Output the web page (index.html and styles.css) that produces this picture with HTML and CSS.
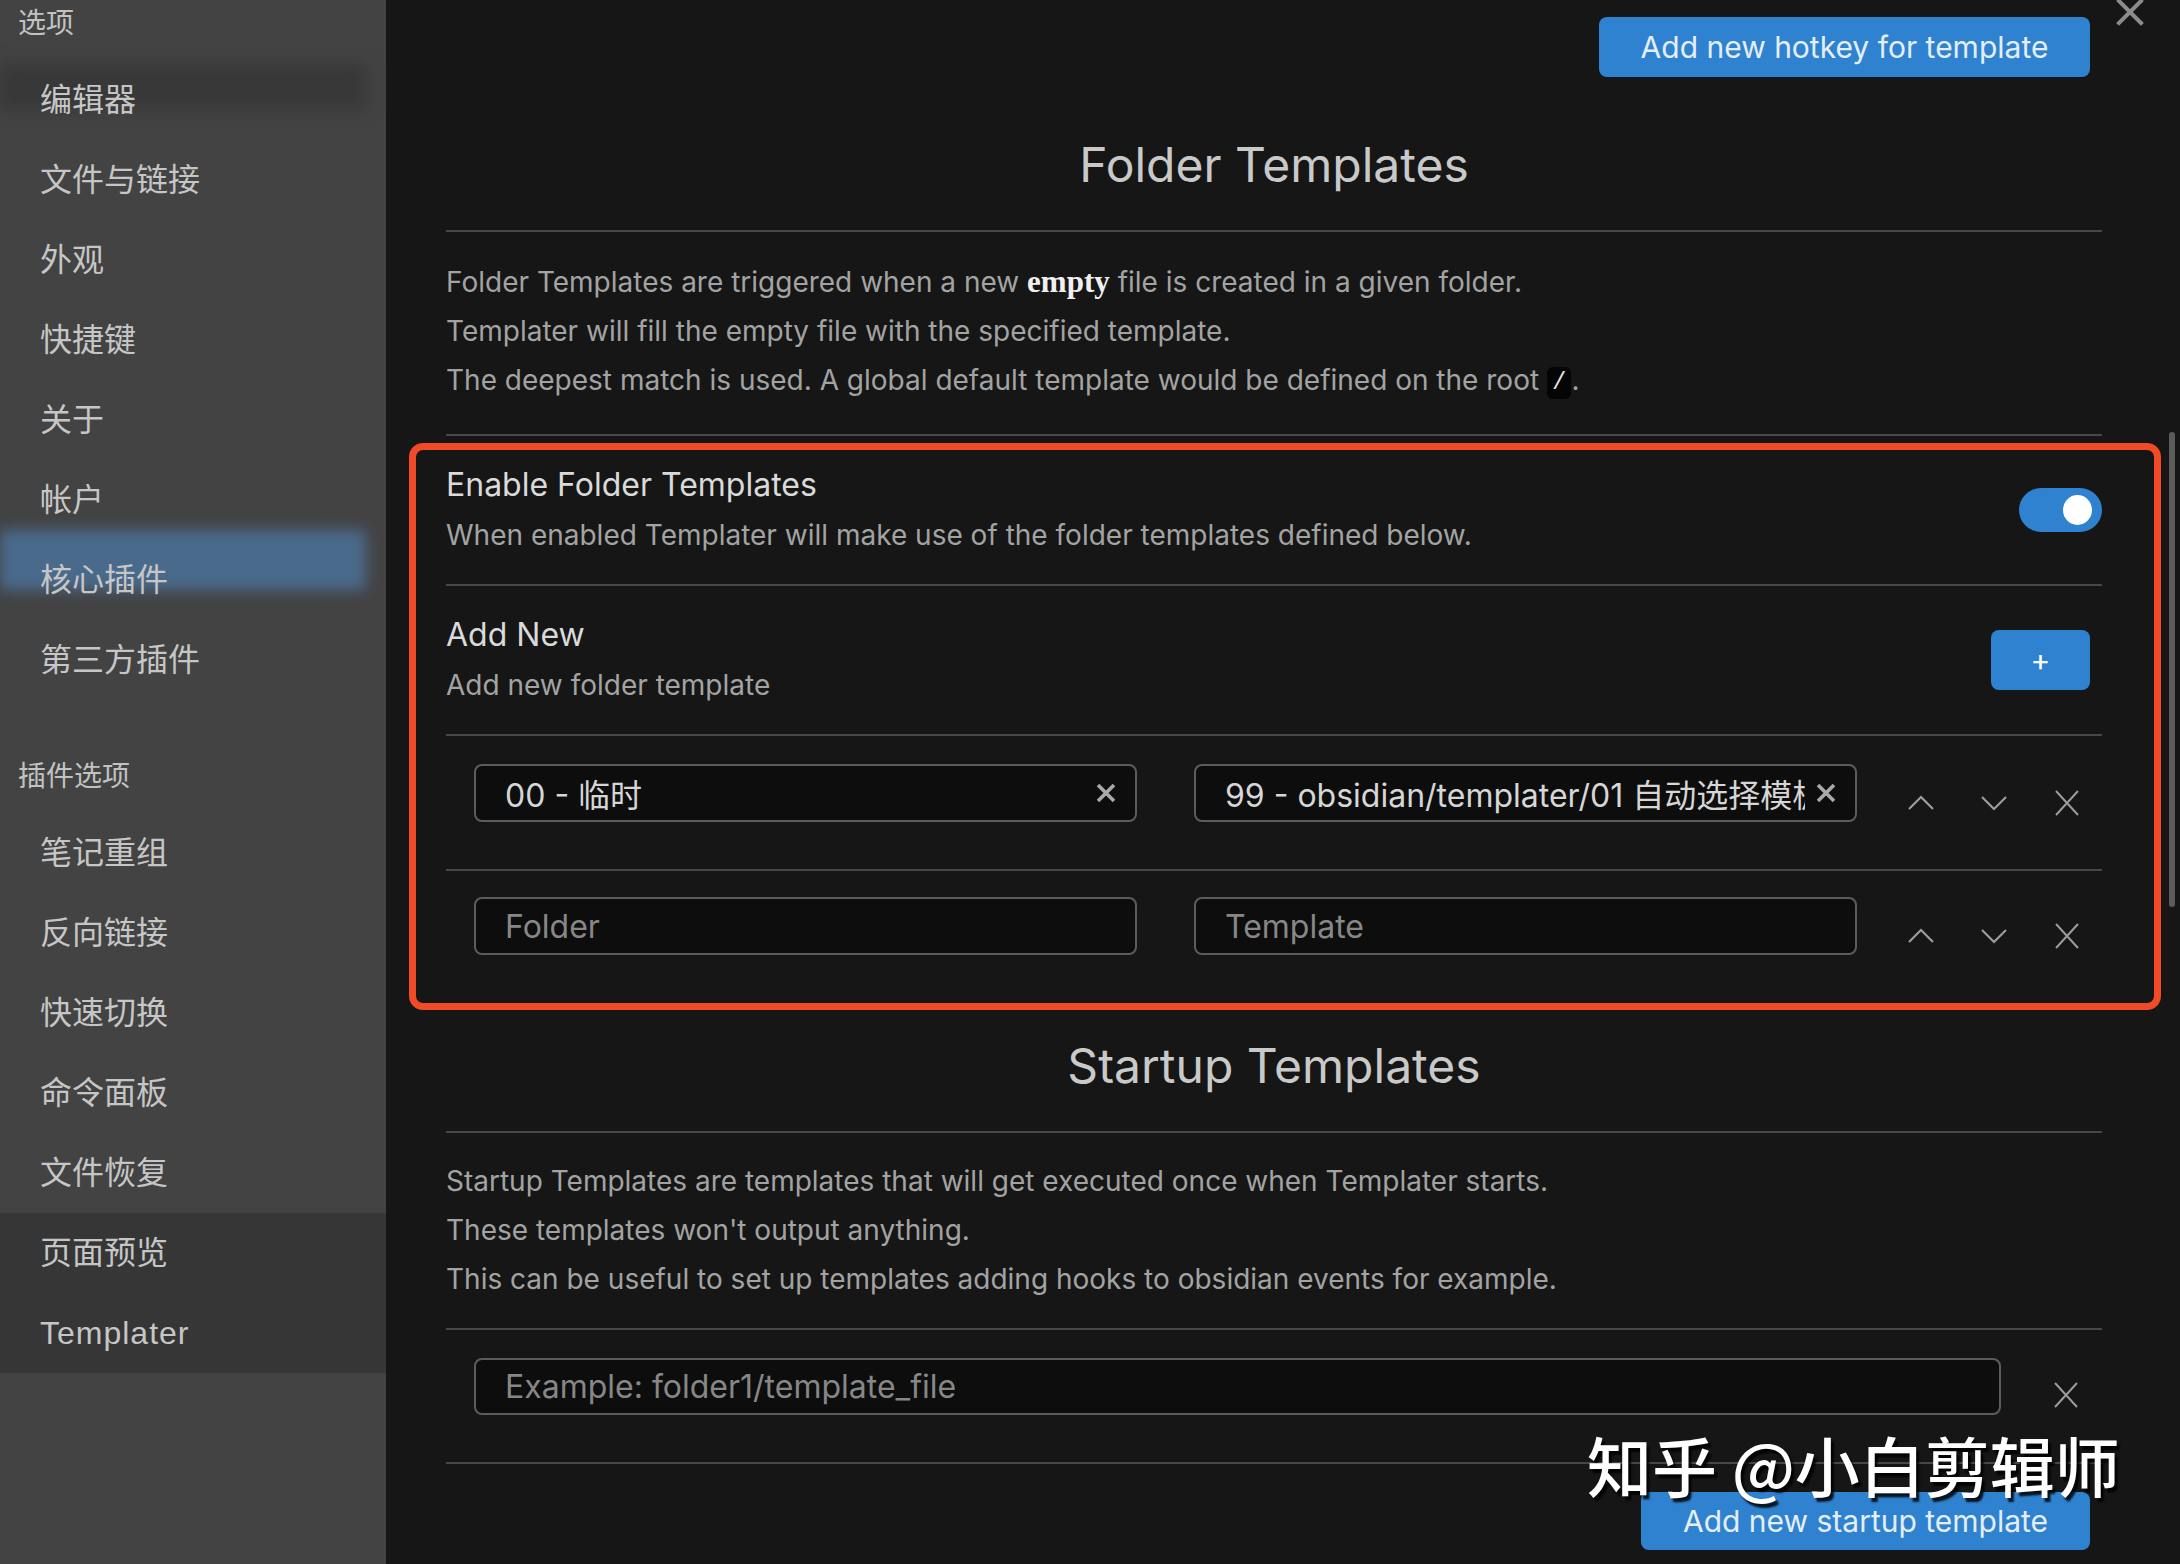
FILE: index.html
```html
<!DOCTYPE html>
<html lang="zh">
<head>
<meta charset="utf-8">
<title>Templater settings</title>
<link rel="stylesheet" href="styles.css">
</head>
<body>
<nav class="sidebar">
  <div class="nav-group">
    <div class="nav-heading">选项</div>
    <div class="nav-item ghost-dark"><span>编辑器</span></div>
    <div class="nav-item"><span>文件与链接</span></div>
    <div class="nav-item"><span>外观</span></div>
    <div class="nav-item"><span>快捷键</span></div>
    <div class="nav-item"><span>关于</span></div>
    <div class="nav-item"><span>帐户</span></div>
    <div class="nav-item ghost-blue"><span>核心插件</span></div>
    <div class="nav-item"><span>第三方插件</span></div>
  </div>
  <div class="nav-group">
    <div class="nav-heading">插件选项</div>
    <div class="nav-item"><span>笔记重组</span></div>
    <div class="nav-item"><span>反向链接</span></div>
    <div class="nav-item"><span>快速切换</span></div>
    <div class="nav-item"><span>命令面板</span></div>
    <div class="nav-item"><span>文件恢复</span></div>
    <div class="nav-item band"><span>页面预览</span></div>
    <div class="nav-item band"><span class="latin">Templater</span></div>
  </div>
</nav>

<main class="main">
  <div class="close-modal">
    <svg width="30" height="30" viewBox="0 0 30 30"><path d="M4 4 L26 26 M26 4 L4 26" stroke="#8c8c8c" stroke-width="4" stroke-linecap="square" fill="none"/></svg>
  </div>
  <div class="scrollbar"></div>

  <div class="top-actions">
    <button class="btn btn-hotkey">Add new hotkey for template</button>
  </div>

  <h2 class="section-title title-first">Folder Templates</h2>
  <div class="section-desc">
    <div>Folder Templates are triggered when a new <strong class="serif">empty</strong> file is created in a given folder.</div>
    <div>Templater will fill the empty file with the specified template.</div>
    <div>The deepest match is used. A global default template would be defined on the root <code class="code">/</code>.</div>
  </div>

  <div class="highlight-box">
    <div class="setting-item first">
      <div class="setting-info">
        <div class="setting-name">Enable Folder Templates</div>
        <div class="setting-desc">When enabled Templater will make use of the folder templates defined below.</div>
      </div>
      <div class="setting-control toggle-wrap">
        <div class="toggle"><div class="knob"></div></div>
      </div>
    </div>

    <div class="setting-item second">
      <div class="setting-info">
        <div class="setting-name">Add New</div>
        <div class="setting-desc">Add new folder template</div>
      </div>
      <div class="setting-control plus-wrap">
        <button class="btn btn-plus">+</button>
      </div>
    </div>

    <div class="folder-row">
      <div class="search-input pair">
        <span class="val">00 - 临时</span>
        <svg class="clear" width="22" height="22" viewBox="0 0 22 22"><path d="M3 3 L19 19 M19 3 L3 19" stroke="#a9a9a9" stroke-width="3.6" fill="none"/></svg>
      </div>
      <div class="search-input pair">
        <span class="val">99 - obsidian/templater/01 自动选择模板</span>
        <svg class="clear" width="22" height="22" viewBox="0 0 22 22"><path d="M3 3 L19 19 M19 3 L3 19" stroke="#a9a9a9" stroke-width="3.6" fill="none"/></svg>
      </div>
      <div class="row-icons">
        <div class="icon"><svg width="28" height="16" viewBox="0 0 28 16"><polyline points="2,14 14,2 26,14" fill="none" stroke="#9c9c9c" stroke-width="2.2"/></svg></div>
        <div class="icon"><svg width="28" height="16" viewBox="0 0 28 16"><polyline points="2,2 14,14 26,2" fill="none" stroke="#9c9c9c" stroke-width="2.2"/></svg></div>
        <div class="icon"><svg width="26" height="28" viewBox="0 0 26 28"><path d="M2 2 L24 26 M24 2 L2 26" fill="none" stroke="#9c9c9c" stroke-width="2"/></svg></div>
      </div>
    </div>

    <div class="folder-row last">
      <div class="search-input pair"><span class="placeholder">Folder</span></div>
      <div class="search-input pair"><span class="placeholder">Template</span></div>
      <div class="row-icons">
        <div class="icon"><svg width="28" height="16" viewBox="0 0 28 16"><polyline points="2,14 14,2 26,14" fill="none" stroke="#9c9c9c" stroke-width="2.2"/></svg></div>
        <div class="icon"><svg width="28" height="16" viewBox="0 0 28 16"><polyline points="2,2 14,14 26,2" fill="none" stroke="#9c9c9c" stroke-width="2.2"/></svg></div>
        <div class="icon"><svg width="26" height="28" viewBox="0 0 26 28"><path d="M2 2 L24 26 M24 2 L2 26" fill="none" stroke="#9c9c9c" stroke-width="2"/></svg></div>
      </div>
    </div>
  </div>

  <h2 class="section-title title-second">Startup Templates</h2>
  <div class="section-desc desc-second">
    <div>Startup Templates are templates that will get executed once when Templater starts.</div>
    <div>These templates won't output anything.</div>
    <div>This can be useful to set up templates adding hooks to obsidian events for example.</div>
  </div>

  <div class="startup-row">
    <div class="search-input wide"><span class="placeholder">Example: folder1/template_file</span></div>
    <div class="row-icons single">
      <div class="icon"><svg width="26" height="28" viewBox="0 0 26 28"><path d="M2 2 L24 26 M24 2 L2 26" fill="none" stroke="#9c9c9c" stroke-width="2"/></svg></div>
    </div>
  </div>

  <div class="bottom-actions">
    <button class="btn btn-startup">Add new startup template</button>
  </div>

  <div class="watermark">知乎 @小白剪辑师</div>
</main>
</body>
</html>
```

FILE: styles.css
```css
* { box-sizing: border-box; }
html, body { margin: 0; padding: 0; }
body {
  width: 2180px;
  height: 1564px;
  overflow: hidden;
  display: flex;
  background: #161616;
  font-family: Inter, "Noto Sans CJK SC", sans-serif;
}

/* ---------- sidebar ---------- */
.sidebar {
  width: 386px;
  flex: none;
  background: #434343;
  color: #c6c6c6;
  font-family: "Liberation Sans", "Noto Sans CJK SC", sans-serif;
}
.nav-heading {
  font-size: 28px;
  line-height: 48px;
  padding-left: 18px;
  color: #c2c2c2;
  margin-bottom: 12px;
}
.nav-group + .nav-group { margin-top: 53px; }
.nav-item {
  position: relative;
  height: 80px;
  line-height: 80px;
  padding-left: 40px;
  font-size: 32px;
}
.nav-item span { position: relative; z-index: 1; }
.nav-item .latin { letter-spacing: 1px; }
.nav-item.band { background: #363636; }
.nav-item.ghost-blue::before {
  content: "";
  position: absolute;
  left: 0;
  top: -10px;
  width: 366px;
  height: 60px;
  background: #4a6a8c;
  filter: blur(7px);
}
.nav-item.ghost-dark::before {
  content: "";
  position: absolute;
  left: 0;
  top: 4px;
  width: 366px;
  height: 46px;
  background: #383838;
  filter: blur(8px);
}

/* ---------- main ---------- */
.main {
  flex: 1;
  position: relative;
  padding: 0 78px 0 60px;
  color: #a3a3a3;
}
.close-modal {
  position: absolute;
  top: -3px;
  right: 35px;
  width: 30px;
  height: 30px;
}
.scrollbar {
  position: absolute;
  right: 5px;
  top: 432px;
  width: 6px;
  height: 475px;
  border-radius: 3px;
  background: #5c5c5c;
}
.btn {
  border: none;
  border-radius: 8px;
  background: #2f82cf;
  color: #e4eef8;
  font-family: Inter, sans-serif;
  font-size: 30px;
  padding: 0;
  cursor: pointer;
}
.top-actions {
  display: flex;
  justify-content: flex-end;
  padding: 17px 12px 0 0;
}
.btn-hotkey { width: 491px; height: 60px; }

.section-title {
  margin: 0;
  text-align: center;
  font-weight: 400;
  font-size: 48px;
  line-height: 60px;
  color: #c9c9c9;
  padding-bottom: 35px;
  border-bottom: 2px solid #484848;
}
.title-first { margin-top: 58px; }
.title-second { margin-top: 26px; }

.section-desc {
  font-size: 28px;
  line-height: 49px;
  color: #a3a3a3;
  padding: 25px 0 29px;
  border-bottom: 2px solid #484848;
}
.section-desc.desc-second { padding: 24px 0 24px; }
.serif {
  font-family: "Liberation Serif", serif;
  font-weight: 700;
  font-size: 31px;
  color: #f0f0f0;
}
.code {
  display: inline-block;
  font-family: "Liberation Mono", monospace;
  font-size: 24px;
  line-height: 32px;
  padding: 0 5px;
  background: #050505;
  color: #e0e0e0;
  border-radius: 6px;
  vertical-align: 1px;
}

/* ---------- highlighted region ---------- */
.highlight-box {
  margin: 7px -59px 0 -37px;
  border: 7px solid #f04a27;
  border-radius: 14px;
  padding: 0 52px 0 30px;
}
.setting-item {
  display: flex;
  align-items: flex-start;
}
.setting-item.first { padding: 13px 0 24px; }
.setting-item.second { padding: 27px 0 24px; border-top: 2px solid #484848; }
.setting-info { flex: 1; }
.setting-name {
  font-size: 32px;
  line-height: 44px;
  color: #dadada;
}
.setting-desc {
  margin-top: 4px;
  font-size: 28px;
  line-height: 49px;
  color: #a3a3a3;
}
.toggle-wrap { margin-top: 25px; }
.toggle {
  position: relative;
  width: 83px;
  height: 44px;
  border-radius: 22px;
  background: #2f82cf;
}
.knob {
  position: absolute;
  right: 10px;
  top: 7px;
  width: 29px;
  height: 30px;
  border-radius: 50%;
  background: #ffffff;
}
.plus-wrap { margin: 17px 12px 0 0; }
.btn-plus {
  width: 99px;
  height: 60px;
  font-size: 30px;
  color: #ffffff;
}

.folder-row {
  display: flex;
  align-items: center;
  padding: 28px 0 47px 28px;
  border-top: 2px solid #484848;
}
.folder-row.last { padding: 26px 0 48px 28px; }
.search-input {
  display: flex;
  align-items: center;
  height: 58px;
  border: 2px solid #5c5c5c;
  border-radius: 8px;
  background: #0d0d0d;
  padding: 0 18px 0 29px;
  font-size: 32px;
  color: #d6d6d6;
  overflow: hidden;
}
.search-input.pair { width: 663px; }
.search-input.pair + .search-input.pair { margin-left: 57px; }
.search-input .val {
  flex: 1;
  min-width: 0;
  white-space: nowrap;
  overflow: hidden;
}
.search-input .clear { flex: none; margin-left: 10px; }
.placeholder { color: #878787; white-space: nowrap; }
.row-icons {
  display: flex;
  gap: 23px;
  margin: 20px 0 0 39px;
}
.icon {
  width: 50px;
  height: 30px;
  display: flex;
  align-items: center;
  justify-content: center;
}

.startup-row {
  display: flex;
  align-items: center;
  padding: 28px 0 47px 28px;
  border-bottom: 2px solid #484848;
}
.search-input.wide { width: 1527px; height: 57px; }
.row-icons.single { margin: 17px 0 0 40px; }

.bottom-actions {
  display: flex;
  justify-content: flex-end;
  padding: 28px 12px 0 0;
}
.btn-startup { width: 449px; height: 58px; }

.watermark {
  position: absolute;
  left: 1201px;
  top: 1424px;
  font-family: "Noto Sans CJK SC", sans-serif;
  font-weight: 500;
  font-size: 65px;
  line-height: 80px;
  color: #ffffff;
  white-space: nowrap;
  text-shadow: 3px 4px 2px rgba(0,0,0,0.85);
}
```
